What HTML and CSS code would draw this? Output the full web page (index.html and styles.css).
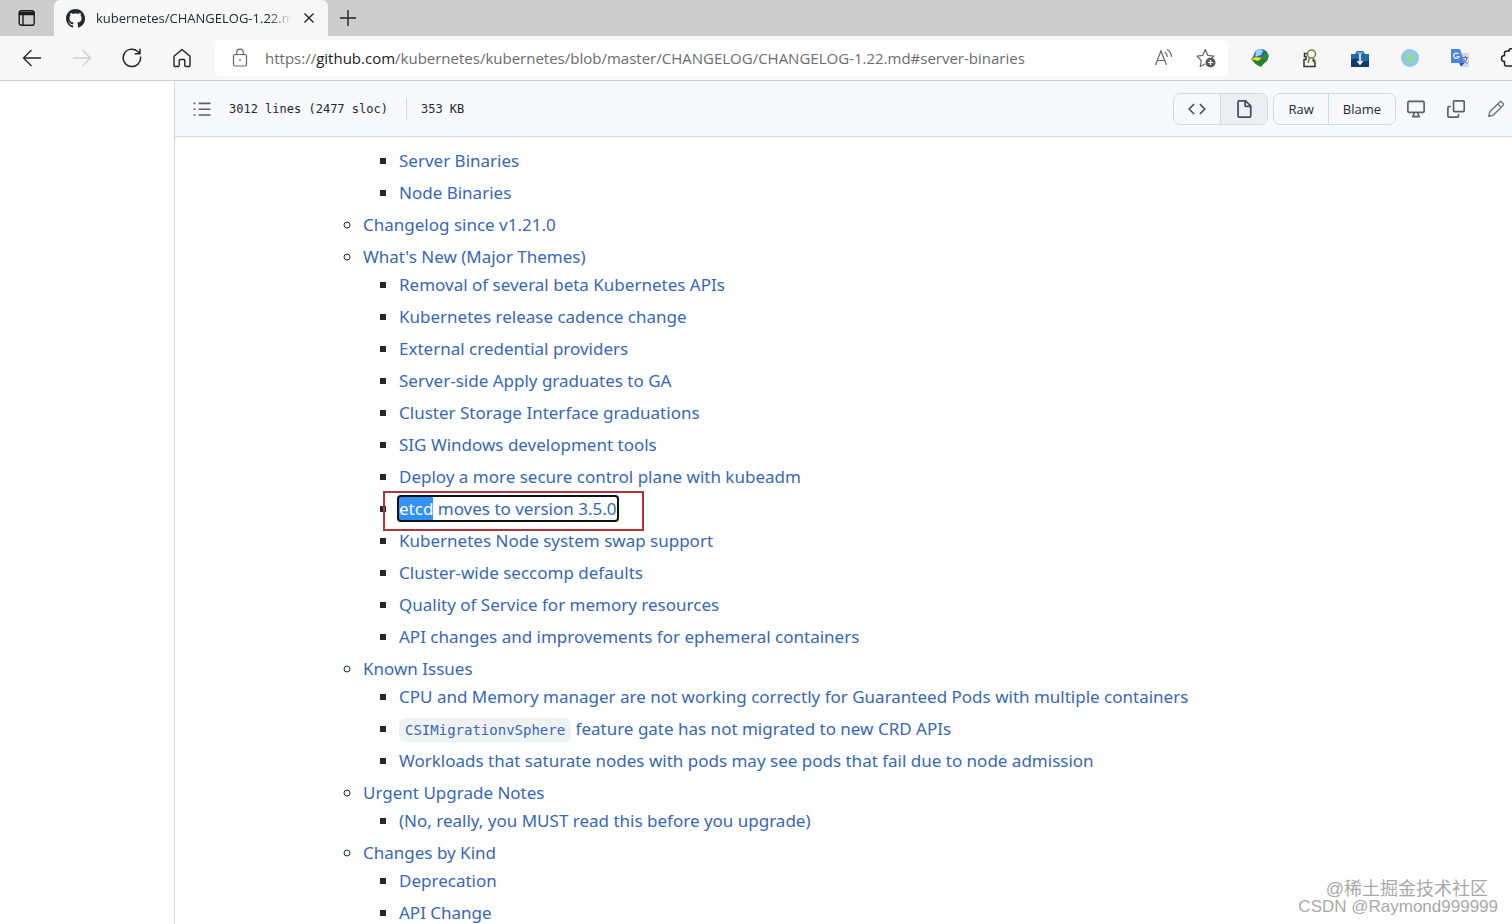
FILE: index.html
```html
<!DOCTYPE html>
<html lang="en">

<head>
    <meta charset="UTF-8">
    <meta name="viewport" content="width=device-width, initial-scale=1.0">
    <title>kubernetes/CHANGELOG-1.22.md</title>
    <link rel="stylesheet" href="styles.css">
</head>

<body>
    <header class="browser">
        <div class="tab-strip">
            <button class="tab-menu" aria-label="Tab actions">
                <svg width="18" height="18" viewBox="0 0 18 18" fill="none" stroke="#1b1b1b" stroke-width="1.4">
                    <rect x="1.2" y="1.7" width="15" height="14.6" rx="2.4" />
                    <path d="M1.5 3.5h14.4v2H1.500z" fill="#1b1b1b" />
                    <path d="M5 5v11" />
                </svg>
            </button>
            <div class="tab">
                <svg width="19" height="19" viewBox="0 0 16 16" fill="#24292f">
                    <path d="M8 0C3.580 0 0 3.580 0 8c0 3.540 2.290 6.530 5.470 7.590.4.070.550-.170.550-.380 0-.190-.010-.820-.010-1.490-2.010.370-2.530-.490-2.690-.940-.090-.230-.480-.940-.820-1.130-.280-.150-.680-.520-.010-.530.630-.010 1.080.580 1.230.820.720 1.210 1.870.870 2.330.660.070-.520.280-.870.510-1.070-1.780-.2-3.640-.890-3.640-3.950 0-.870.310-1.590.820-2.150-.080-.2-.360-1.020.080-2.120 0 0 .670-.210 2.200.820.640-.180 1.320-.270 2-.270s1.360.090 2 .270c1.530-1.040 2.200-.820 2.200-.820.440 1.100.160 1.920.080 2.120.510.560.820 1.270.820 2.150 0 3.070-1.870 3.750-3.650 3.950.290.250.540.730.540 1.480 0 1.070-.010 1.930-.010 2.200 0 .210.150.460.550.380A8.010 8.010 0 0 0 16 8c0-4.420-3.580-8-8-8z" />
                </svg>
                <span class="tab-title">kubernetes/CHANGELOG-1.22.md</span>
                <button class="tab-close" aria-label="Close tab">
                    <svg width="10" height="10" viewBox="0 0 10 10" stroke="#222" stroke-width="1.4">
                        <path d="M.5.5l9 9M9.500.5l-9 9" />
                    </svg>
                </button>
            </div>
            <button class="tab-new" aria-label="New tab">
                <svg width="16" height="16" viewBox="0 0 16 16" stroke="#222" stroke-width="1.4">
                    <path d="M8 0v16M0 8h16" />
                </svg>
            </button>
        </div>

        <div class="nav-bar">
            <nav class="nav-buttons">
                <button aria-label="Back">
                    <svg width="20" height="20" viewBox="0 0 20 20" fill="none" stroke="#222" stroke-width="1.3">
                        <path d="M19 10H1.500M9.500 2l-8 8 8 8" />
                    </svg>
                </button>
                <button aria-label="Forward">
                    <svg width="20" height="20" viewBox="0 0 20 20" fill="none" stroke="#cfcfcf" stroke-width="1.3">
                        <path d="M1 10h17.500M10.500 2l8 8-8 8" />
                    </svg>
                </button>
                <button aria-label="Refresh">
                    <svg width="20" height="20" viewBox="0 0 20 20" fill="none" stroke="#222" stroke-width="1.5">
                        <path d="M18.500 8.500A8.700 8.700 0 1 1 15.500 3.200l2.300 2.300M18 .8v5h-5.300" />
                    </svg>
                </button>
                <button aria-label="Home">
                    <svg width="20" height="20" viewBox="0 0 20 20" fill="none" stroke="#222" stroke-width="1.4" stroke-linejoin="round">
                        <path d="M2 8.300L10 1.500l8 6.800v9.200q0 1-1 1h-3.200q-1 0-1-1V12.500q0-1-1-1H8.200q-1 0-1 1v5q0 1-1 1H3q-1 0-1-1z" />
                    </svg>
                </button>
            </nav>
            <div class="address">
                <svg width="16" height="20" viewBox="0 0 16 20" fill="none" stroke="#666" stroke-width="1.2">
                    <rect x="1.500" y="6.500" width="13" height="11.500" rx="1.500" />
                    <path d="M4.700 6.500V4.500a3.300 3.300 0 0 1 6.600 0v2" />
                    <circle cx="8" cy="12.200" r=".9" fill="#666" stroke="none" />
                </svg>
                <a class="url" href="#server-binaries">https://<span class="host">github.com</span>/kubernetes/kubernetes/blob/master/CHANGELOG/CHANGELOG-1.22.md#server-binaries</a>
                <button aria-label="Read aloud">
                    <svg width="20" height="20" viewBox="0 0 20 20" fill="none" stroke="#666" stroke-width="1.2">
                        <path d="M1.500 17L7 3l5.500 14M3.400 12.500h7.200M10.500 4q2.500 1.500 2.800 5M13 1.500q4.500 2.500 4.500 7.500" />
                    </svg>
                </button>
                <button aria-label="Add to favorites">
                    <svg width="20" height="20" viewBox="0 0 20 20" fill="none" stroke="#666" stroke-width="1.200" stroke-linejoin="round">
                        <path d="M9 16l-4.800 2.500 1-6L1 8.200l5.700-.8L9.300 1.500l2.600 5.900 6 .8-2 2" />
                        <circle cx="14.500" cy="14.500" r="5" fill="#5c5c5c" stroke="none" />
                        <path d="M14.500 12v5M12 14.500h5" stroke="#fff" />
                    </svg>
                </button>
            </div>
            <div class="extensions">
                <button aria-label="Download manager">
                    <svg width="20" height="20" viewBox="0 0 20 20">
                        <circle cx="11" cy="8.500" r="7.500" fill="#2866b8" />
                        <path d="M6 3q5-4 7 0l-2 4-6 2z" fill="#9bd1ef" />
                        <path d="M14 5q4-1 4.500 3l-1 4-4 2-2-3z" fill="#338d32" />
                        <path d="M1 11l4-4 1 3 6-1 2 3 2 1-5 6-5-2.500z" fill="#25802a" />
                        <path d="M1 11l5-2 6 1-4 3z" fill="#f3db3a" />
                    </svg>
                </button>
                <button aria-label="Profile extension">
                    <svg width="20" height="20" viewBox="0 0 20 20" fill="none" stroke-width="1.500">
                        <path d="M7 5.500H4.500v3H6v3H4v7h11v-4l-2.500-3" stroke="#303722" />
                        <circle cx="11.500" cy="6" r="4" stroke="#6c8539" />
                        <path d="M9.500 9.500L8 15M13 10l2.500 3.500" stroke="#6c8539" />
                    </svg>
                </button>
                <button aria-label="Toolbox extension">
                    <svg width="20" height="20" viewBox="0 0 20 20">
                        <path d="M1 6h4l2-3h6l2 3h4v13H1z" fill="#2469a8" />
                        <path d="M1 12q5-3 9 0t9 0v7H1z" fill="#113b66" />
                        <path d="M7 6l1-2h4l1 2z" fill="#77add5" />
                        <path d="M10 6v9M7.500 13l2.500 3 2.500-3" fill="none" stroke="#fff" stroke-width="1.500" />
                    </svg>
                </button>
                <button aria-label="Status extension">
                    <svg width="20" height="20" viewBox="0 0 20 20">
                        <circle cx="10" cy="10" r="9" fill="#8cc9ed" />
                        <circle cx="10" cy="10" r="5" fill="#98d5a5" />
                    </svg>
                </button>
                <button aria-label="Translate">
                    <svg width="20" height="20" viewBox="0 0 20 20">
                        <path d="M8 5h11v14h-8z" fill="#d5d8df" />
                        <path d="M1 1h9l4.500 14H1z" fill="#4b85e8" />
                        <path d="M9 15h5.500L11 18.500z" fill="#3155b5" />
                        <path d="M8.500 6A2.700 2.700 0 1 0 9 8.500H6.500" fill="none" stroke="#fff" stroke-width="1.200" />
                        <path d="M12.500 9.500h5.500M15.200 8v1.500M13.500 11q1.500 3 4 4.500M17 10q-.5 3-3 5" fill="none" stroke="#68717e" />
                    </svg>
                </button>
                <button aria-label="Extensions">
                    <svg width="20" height="20" viewBox="0 0 20 20" fill="none" stroke="#222" stroke-width="1.500">
                        <path d="M7 3h2a2.500 2.500 0 0 1 5 0h3v15H6.500q-2 0-2-2v-2.500a2.500 2.500 0 0 1 0-6V5q0-2 2.500-2z" />
                    </svg>
                </button>
            </div>
        </div>
    </header>

    <main class="file">
        <div class="file-header">
            <button class="outline-button" aria-label="Table of contents">
                <svg width="18" height="18" viewBox="0 0 16 16" fill="none" stroke="#57606a" stroke-width="1.400">
                    <path d="M5 3h10.500M5 8.200h10.500M5 13.400h10.500M.5 3h1.600M.5 8.200h1.600M.5 13.400h1.600" />
                </svg>
            </button>
            <div class="file-info">
                <span>3012 lines (2477 sloc)</span>
                <span class="file-size">353 KB</span>
            </div>
            <div class="file-actions">
                <div class="button-group">
                    <button aria-label="Display the source">
                        <svg width="18" height="18" viewBox="0 0 16 16" fill="none" stroke="#444c56" stroke-width="1.500" stroke-linecap="round" stroke-linejoin="round">
                            <path d="M5 4L1 8l4 4M11 4l4 4-4 4" />
                        </svg>
                    </button>
                    <button class="selected" aria-label="Display the rendered file">
                        <svg width="18" height="18" viewBox="0 0 16 16" fill="none" stroke="#444c56" stroke-width="1.500" stroke-linejoin="round">
                            <path d="M3.700.8h5.600L14 5.200v9q0 1-1 1H3.700q-1 0-1-1V1.800q0-1 1-1zM9 .8V5q0 .7.700.7H14" />
                        </svg>
                    </button>
                </div>
                <div class="button-group">
                    <button>Raw</button>
                    <button>Blame</button>
                </div>
                <button class="icon-button" aria-label="Open in desktop">
                    <svg width="18" height="18" viewBox="0 0 16 16" fill="none" stroke="#57606a" stroke-width="1.500" stroke-linejoin="round">
                        <rect x=".8" y="1.300" width="14.400" height="9.700" rx="1" />
                        <path d="M6.500 11L5.500 14.700M9.500 11l1 3.700M4.500 14.800h7" />
                    </svg>
                </button>
                <button class="icon-button" aria-label="Copy raw contents">
                    <svg width="18" height="18" viewBox="0 0 16 16" fill="none" stroke="#57606a" stroke-width="1.500">
                        <rect x="5.800" y=".8" width="9.500" height="9.500" rx="1" />
                        <path d="M3.500 5.800H1.800q-1 0-1 1v7.400q0 1 1 1h7.400q1 0 1-1v-1.700" />
                    </svg>
                </button>
                <button class="icon-button" aria-label="Edit this file">
                    <svg width="18" height="18" viewBox="0 0 16 16" fill="none" stroke="#6e7781" stroke-width="1.300" stroke-linejoin="round">
                        <path d="M1.500 14.500l1-4L11.300 1.700q.7-.7 1.500 0l1.500 1.500q.7.700 0 1.500L5.500 13.500zM9.500 3.500l3 3" />
                    </svg>
                </button>
            </div>
        </div>

        <article class="markdown">
            <ul class="level-1">
                <li>
                    <ul>
                        <li><a href="#">Server Binaries</a></li>
                        <li><a href="#">Node Binaries</a></li>
                    </ul>
                </li>
                <li><a href="#">Changelog since v1.21.0</a></li>
                <li><a href="#">What's New (Major Themes)</a>
                    <ul>
                        <li><a href="#">Removal of several beta Kubernetes APIs</a></li>
                        <li><a href="#">Kubernetes release cadence change</a></li>
                        <li><a href="#">External credential providers</a></li>
                        <li><a href="#">Server-side Apply graduates to GA</a></li>
                        <li><a href="#">Cluster Storage Interface graduations</a></li>
                        <li><a href="#">SIG Windows development tools</a></li>
                        <li><a href="#">Deploy a more secure control plane with kubeadm</a></li>
                        <li class="marked"><a class="focused" href="#"><mark>etcd</mark> moves to version 3.5.0</a></li>
                        <li><a href="#">Kubernetes Node system swap support</a></li>
                        <li><a href="#">Cluster-wide seccomp defaults</a></li>
                        <li><a href="#">Quality of Service for memory resources</a></li>
                        <li><a href="#">API changes and improvements for ephemeral containers</a></li>
                    </ul>
                </li>
                <li><a href="#">Known Issues</a>
                    <ul>
                        <li><a href="#">CPU and Memory manager are not working correctly for Guaranteed Pods with multiple containers</a></li>
                        <li><a href="#"><code>CSIMigrationvSphere</code> feature gate has not migrated to new CRD APIs</a></li>
                        <li><a href="#">Workloads that saturate nodes with pods may see pods that fail due to node admission</a></li>
                    </ul>
                </li>
                <li><a href="#">Urgent Upgrade Notes</a>
                    <ul>
                        <li><a href="#">(No, really, you MUST read this before you upgrade)</a></li>
                    </ul>
                </li>
                <li><a href="#">Changes by Kind</a>
                    <ul>
                        <li><a href="#">Deprecation</a></li>
                        <li><a href="#">API Change</a></li>
                    </ul>
                </li>
            </ul>
        </article>
    </main>

    <div class="watermark">
        <span class="community">@稀土掘金技术社区</span>
        <span>CSDN @Raymond999999</span>
    </div>
</body>

</html>
```
FILE: styles.css
```css
* {
    box-sizing: border-box;
}

body {
    margin: 0;
    height: 100vh;
    overflow: hidden;
    display: flex;
    flex-direction: column;
    background: #fff;
    color: #24292f;
    font-family: "Open Sans", "Noto Sans", sans-serif;
}

button {
    display: flex;
    align-items: center;
    justify-content: center;
    padding: 0;
    border: none;
    background: none;
    font-family: inherit;
    color: inherit;
}

a {
    color: #3767b5;
    text-decoration: none;
}

svg {
    display: block;
    flex-shrink: 0;
}

/* browser window */
.browser {
    flex-shrink: 0;
    background: #f7f7f7;
    border-bottom: 1px solid #cecece;
}

.tab-strip {
    display: flex;
    height: 36px;
    background: #cdcdcd;
}

.tab-menu {
    width: 54px;
}

.tab {
    display: flex;
    align-items: center;
    width: 274px;
    padding: 0 14px 0 12px;
    background: #f7f7f7;
    border-radius: 6px 6px 0 0;
}

.tab-title {
    flex: 1;
    min-width: 0;
    margin: 0 12px 0 11px;
    overflow: hidden;
    white-space: nowrap;
    font-size: 13px;
    -webkit-mask-image: linear-gradient(to right, #000 88%, transparent);
    mask-image: linear-gradient(to right, #000 88%, transparent);
}

.tab-new {
    width: 40px;
}

.nav-bar {
    display: flex;
    align-items: center;
    height: 44px;
}

.nav-buttons {
    display: flex;
    gap: 30px;
    padding: 0 23px 0 22px;
}

.address {
    flex: 1;
    display: flex;
    align-items: center;
    height: 36px;
    padding: 0 12px 0 17px;
    background: #fff;
    border-radius: 5px;
}

.address button {
    margin-left: 22px;
}

.url {
    flex: 1;
    margin-left: 17px;
    white-space: nowrap;
    font-size: 15px;
    color: #6c6c6c;
}

.host {
    color: #1b1b1b;
}

.extensions {
    display: flex;
    gap: 30px;
    padding-left: 22px;
    margin-right: -8px;
}

/* file view */
.file {
    flex: 1;
    min-height: 0;
    margin-left: 174px;
    border-left: 1px solid #d5d9de;
}

.file-header {
    display: flex;
    align-items: center;
    height: 56px;
    padding-left: 18px;
    background: #f6f8fa;
    border-bottom: 1px solid #d5d9de;
}

.file-info {
    display: flex;
    align-items: center;
    margin-left: 18px;
    font-family: "DejaVu Sans Mono", monospace;
    font-size: 12px;
    line-height: 22px;
}

.file-size {
    margin-left: 18px;
    padding-left: 14px;
    border-left: 1px solid #d5d9de;
}

.file-actions {
    display: flex;
    align-items: center;
    margin-left: auto;
    padding-right: 7px;
}

.button-group {
    display: flex;
    height: 32px;
    margin-right: 5px;
    border: 1px solid #d5d8dc;
    border-radius: 7px;
    overflow: hidden;
}

.button-group button {
    padding: 0 14px;
    font-size: 13px;
    font-weight: 500;
}

.button-group button + button {
    border-left: 1px solid #d5d8dc;
}

.button-group .selected {
    background: #eceff2;
}

.icon-button {
    margin-left: 22px;
}

.button-group + .icon-button {
    margin-left: 6px;
}

.markdown {
    padding: 10px 0 0 152px;
    font-family: "Noto Sans", "Open Sans", sans-serif;
    font-size: 17px;
    line-height: 28px;
}

.markdown ul {
    margin: 0;
    padding-left: 36px;
    list-style-type: square;
}

.markdown .level-1 {
    list-style-type: circle;
}

.markdown li + li {
    margin-top: 4px;
}

.level-1 > li:first-child {
    list-style-type: none;
}

.markdown code {
    padding: 4px 6px;
    background: #eff1f3;
    border-radius: 6px;
    font-family: "DejaVu Sans Mono", monospace;
    font-size: 14px;
    line-height: 20px;
}

.focused {
    outline: 2px solid #101010;
    border-radius: 2px;
}

.focused mark {
    background: #3390ff;
    color: #fff;
}

.marked {
    position: relative;
}

/* red frame drawn over the list */
.marked::after {
    content: "";
    position: absolute;
    box-sizing: border-box;
    top: -4px;
    left: -16px;
    width: 261px;
    height: 40px;
    border: 2px solid #b4323a;
}

.watermark {
    position: absolute;
    right: 14px;
    bottom: 8px;
    display: flex;
    flex-direction: column;
    align-items: flex-end;
    font-family: "Liberation Sans", "Noto Sans CJK SC", sans-serif;
    font-size: 17px;
    line-height: 18px;
    color: #a9a9a9;
}

.community {
    margin-right: 10px;
    font-size: 18px;
}
```
